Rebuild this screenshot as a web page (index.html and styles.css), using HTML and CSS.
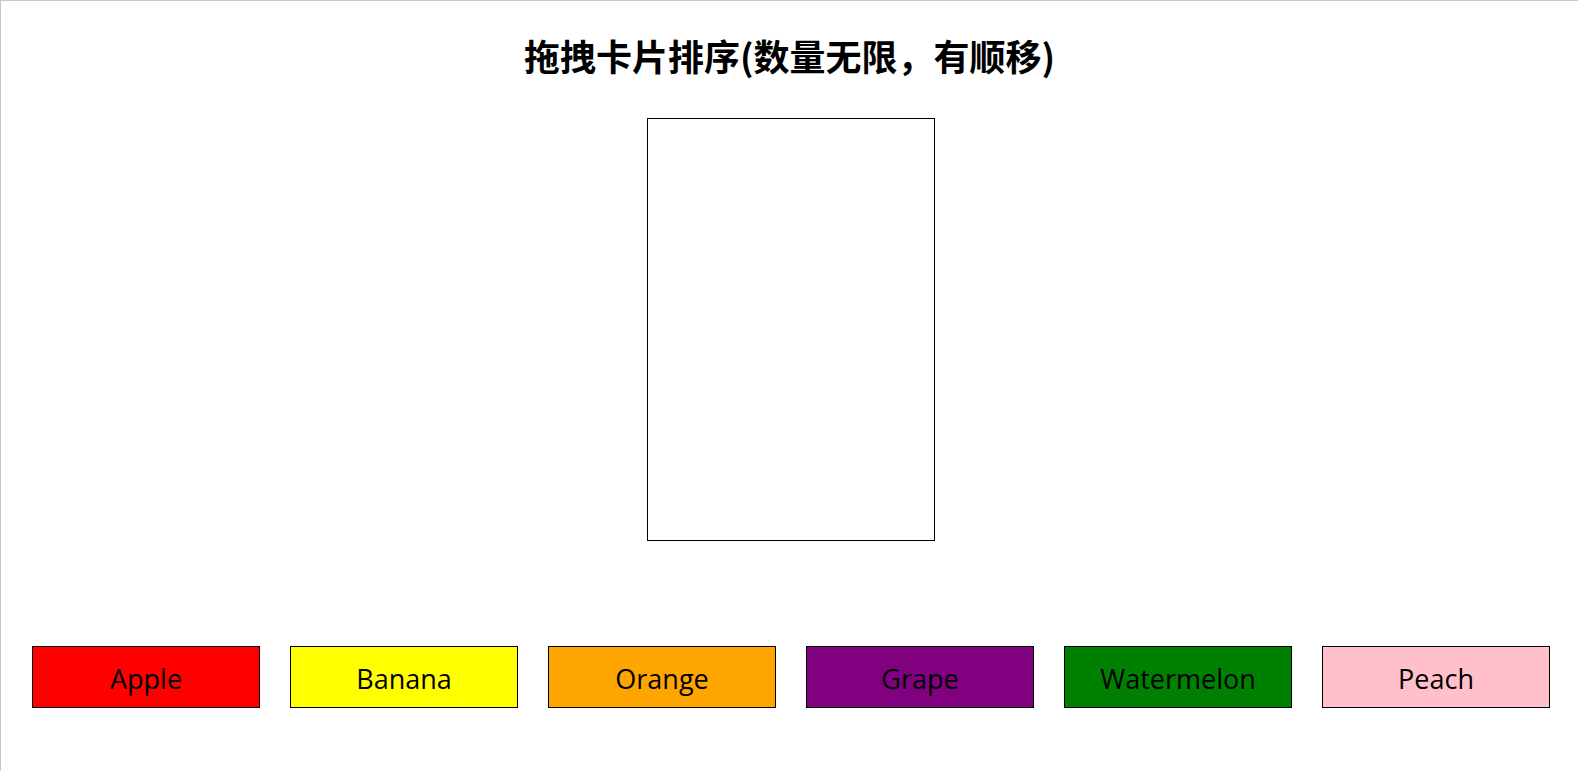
FILE: index.html
```html
<!DOCTYPE html>
<html lang="zh-CN">
<head>
<meta charset="utf-8">
<title>拖拽卡片排序</title>
<link rel="stylesheet" href="styles.css">
</head>
<body>
<div class="page">
  <h1 class="title">拖拽卡片排序(数量无限，有顺移)</h1>
  <div class="drop-zone"></div>
  <div class="cards">
    <div class="card apple">Apple</div>
    <div class="card banana">Banana</div>
    <div class="card orange">Orange</div>
    <div class="card grape">Grape</div>
    <div class="card watermelon">Watermelon</div>
    <div class="card peach">Peach</div>
  </div>
</div>
</body>
</html>
```

FILE: styles.css
```css
html, body {
  margin: 0;
  padding: 0;
  background: #fff;
}

.page {
  box-sizing: border-box;
  height: 771px;
  border-top: 1px solid #c8c8c8;
  border-left: 1px solid #c8c8c8;
  display: flex;
  flex-direction: column;
  align-items: center;
  font-family: "Open Sans", "Noto Sans", sans-serif;
  color: #000;
}

.title {
  margin: 28px 0 0 0;
  font-family: "Noto Sans CJK SC", "Noto Sans", sans-serif;
  font-size: 36px;
  font-weight: 700;
  line-height: 52px;
  height: 52px;
}

.drop-zone {
  box-sizing: border-box;
  margin-top: 37px;
  width: 288px;
  height: 423px;
  border: 1px solid #000;
  margin-left: 2px;
}

.cards {
  align-self: stretch;
  margin-top: 105px;
  padding: 0 28px 0 31px;
  display: flex;
  gap: 30px;
}

.card {
  box-sizing: border-box;
  flex: 1 1 0;
  height: 62px;
  border: 1px solid #000;
  display: flex;
  align-items: center;
  justify-content: center;
  font-size: 27px;
  padding-top: 2px;
}

.apple { background: red; }
.banana { background: yellow; }
.orange { background: orange; }
.grape { background: purple; }
.watermelon { background: green; }
.peach { background: pink; }
```
